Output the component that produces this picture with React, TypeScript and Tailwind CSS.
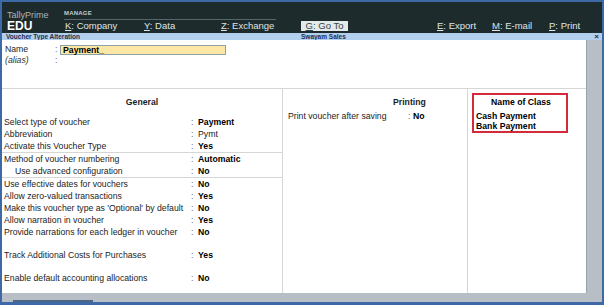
import React from "react"

type Row = { label: string; value: string; bold?: boolean; indent?: boolean }

const group1: Row[] = [
  { label: "Select type of voucher", value: "Payment", bold: true },
  { label: "Abbreviation", value: "Pymt" },
  { label: "Activate this Voucher Type", value: "Yes", bold: true },
]
const group2: Row[] = [
  { label: "Method of voucher numbering", value: "Automatic", bold: true },
  { label: "Use advanced configuration", value: "No", bold: true, indent: true },
]
const group3: Row[] = [
  { label: "Use effective dates for vouchers", value: "No", bold: true },
  { label: "Allow zero-valued transactions", value: "Yes", bold: true },
  { label: "Make this voucher type as 'Optional' by default", value: "No", bold: true },
  { label: "Allow narration in voucher", value: "Yes", bold: true },
  { label: "Provide narrations for each ledger in voucher", value: "No", bold: true },
]

function FieldRow({ row }: { row: Row }) {
  return (
    <div className="flex h-[12px] items-center leading-[12px] text-[8.7px]">
      <span className={`w-[189px] text-[#1c1c1c] ${row.indent ? "pl-[13px]" : "pl-[2px]"}`}>{row.label}</span>
      <span className="w-[7px] text-[#666]">:</span>
      <span className={row.bold ? "font-bold text-black" : "text-[#222]"}>{row.value}</span>
    </div>
  )
}

function MenuItem({ k, label, className }: { k: string; label: string; className?: string }) {
  return (
    <span className={`text-[9.5px] text-[#dfe5e7] ${className ?? ""}`}>
      <span className="underline">{k}</span>: {label}
    </span>
  )
}

export default function App() {
  return (
    <div
      className="w-[604px] h-[305px] bg-[#3d69a6] pt-[2px] pl-[2px] pr-[2px] pb-[3px] flex flex-col overflow-hidden"
      style={{ fontFamily: '"Liberation Sans", Arial, sans-serif' }}
    >
      {/* top bar */}
      <div className="h-[31px] bg-[#1e2b2d] flex shrink-0">
        <div className="w-[62px] flex flex-col pl-[5px] pt-[8px]">
          <span className="text-[9px] leading-[10px] text-[#a9b5b9]">TallyPrime</span>
          <span className="text-[12px] leading-[12px] font-bold text-white">EDU</span>
        </div>
        <div className="flex flex-col pt-[7px]">
          <div className="w-[212px] h-[11px] border-b border-[#56666b] text-[6px] leading-[8px] font-bold text-[#c3ccd0] tracking-[0.2px]">
            MANAGE
          </div>
          <div className="flex items-center h-[12px] leading-[12px]">
            <MenuItem k="K" label="Company" className="ml-[1px] w-[79px]" />
            <MenuItem k="Y" label="Data" className="w-[77px]" />
            <MenuItem k="Z" label="Exchange" className="w-[80px]" />
            <span className="w-[47px] h-[10px] bg-[#e4e9ea] text-[9.5px] leading-[10px] text-[#33464c] text-center">
              <span className="underline">G</span>: Go To
            </span>
            <MenuItem k="E" label="Export" className="ml-[89px] w-[55px]" />
            <MenuItem k="M" label="E-mail" className="w-[57px]" />
            <MenuItem k="P" label="Print" />
          </div>
        </div>
      </div>

      {/* title bar */}
      <div className="h-[7px] bg-[#b2d0ee] flex items-center shrink-0 text-[6.5px] leading-[7px] font-bold text-[#1d2d55]">
        <span className="pl-[4px] w-[299px]">Voucher Type Alteration</span>
        <span className="flex-1">Swayam Sales</span>
        <span className="pr-[3px] text-[8px]">×</span>
      </div>

      {/* body */}
      <div className="flex-1 flex min-h-0">
        <div className="flex-1 flex flex-col bg-white">
          <div className="h-[48px] shrink-0 pt-[5px] text-[8.7px]">
            <div className="flex h-[10px] items-center">
              <span className="w-[53px] pl-[3px] text-[#1c1c1c]">Name</span>
              <span className="w-[5px] text-[#666]">:</span>
              <div className="w-[166px] h-[10px] border border-[#8ea3a3] bg-[#fce7a6] pl-[2px] font-bold leading-[8px] text-black">
                Payment_
              </div>
            </div>
            <div className="flex h-[9px] mt-[1px] items-center">
              <span className="w-[53px] pl-[3px] italic text-[#333]">(alias)</span>
              <span className="w-[5px] text-[#666]">:</span>
            </div>
          </div>

          <div className="flex-1 flex border-t border-[#d6d6d6]">
            {/* General */}
            <div className="w-[281px] border-r border-[#d6d6d6] pt-[7px]">
              <div className="h-[12px] leading-[12px] text-[8.7px] font-bold text-center text-[#1c1c1c]">General</div>
              <div className="mt-[8px] border-b border-[#d6d6d6]">
                {group1.map((r) => <FieldRow key={r.label} row={r} />)}
              </div>
              <div className="border-b border-[#d6d6d6]">
                {group2.map((r) => <FieldRow key={r.label} row={r} />)}
              </div>
              <div>
                {group3.map((r) => <FieldRow key={r.label} row={r} />)}
              </div>
              <div className="mt-[11px]">
                <FieldRow row={{ label: "Track Additional Costs for Purchases", value: "Yes", bold: true }} />
              </div>
              <div className="mt-[11px]">
                <FieldRow row={{ label: "Enable default accounting allocations", value: "No", bold: true }} />
              </div>
            </div>

            {/* Printing */}
            <div className="w-[185px] border-r border-[#d6d6d6] pt-[7px] text-[8.7px]">
              <div className="h-[12px] leading-[12px] font-bold text-[#1c1c1c] pl-[110px]">Printing</div>
              <div className="mt-[2px] flex h-[12px] leading-[12px]">
                <span className="w-[125px] pl-[5px] text-[#1c1c1c]">Print voucher after saving</span>
                <span className="w-[5px] text-[#666]">:</span>
                <span className="font-bold text-black">No</span>
              </div>
            </div>

            {/* Name of Class */}
            <div className="flex-1 pt-[4px] pl-[4px]">
              <div className="w-[96px] border-2 border-[#d22b3c] pt-[1px] pl-[2px] text-[8.7px] font-bold text-black">
                <div className="h-[12px] leading-[12px] text-center">Name of Class</div>
                <div className="mt-[3px] h-[10px] leading-[10px]">Cash Payment</div>
                <div className="h-[10px] leading-[10px]">Bank Payment</div>
              </div>
            </div>
          </div>
        </div>
        <div className="w-[16px] bg-[#b7bec6] border-l border-[#9aa3ab]" />
      </div>

      {/* bottom scroll bar */}
      <div className="h-[9px] shrink-0 bg-[#b7bec6] flex flex-col">
        <div className="flex-1" />
        <div className="ml-[11px] w-[80px] h-[2px] bg-[#4a6684]" />
      </div>
    </div>
  )
}
